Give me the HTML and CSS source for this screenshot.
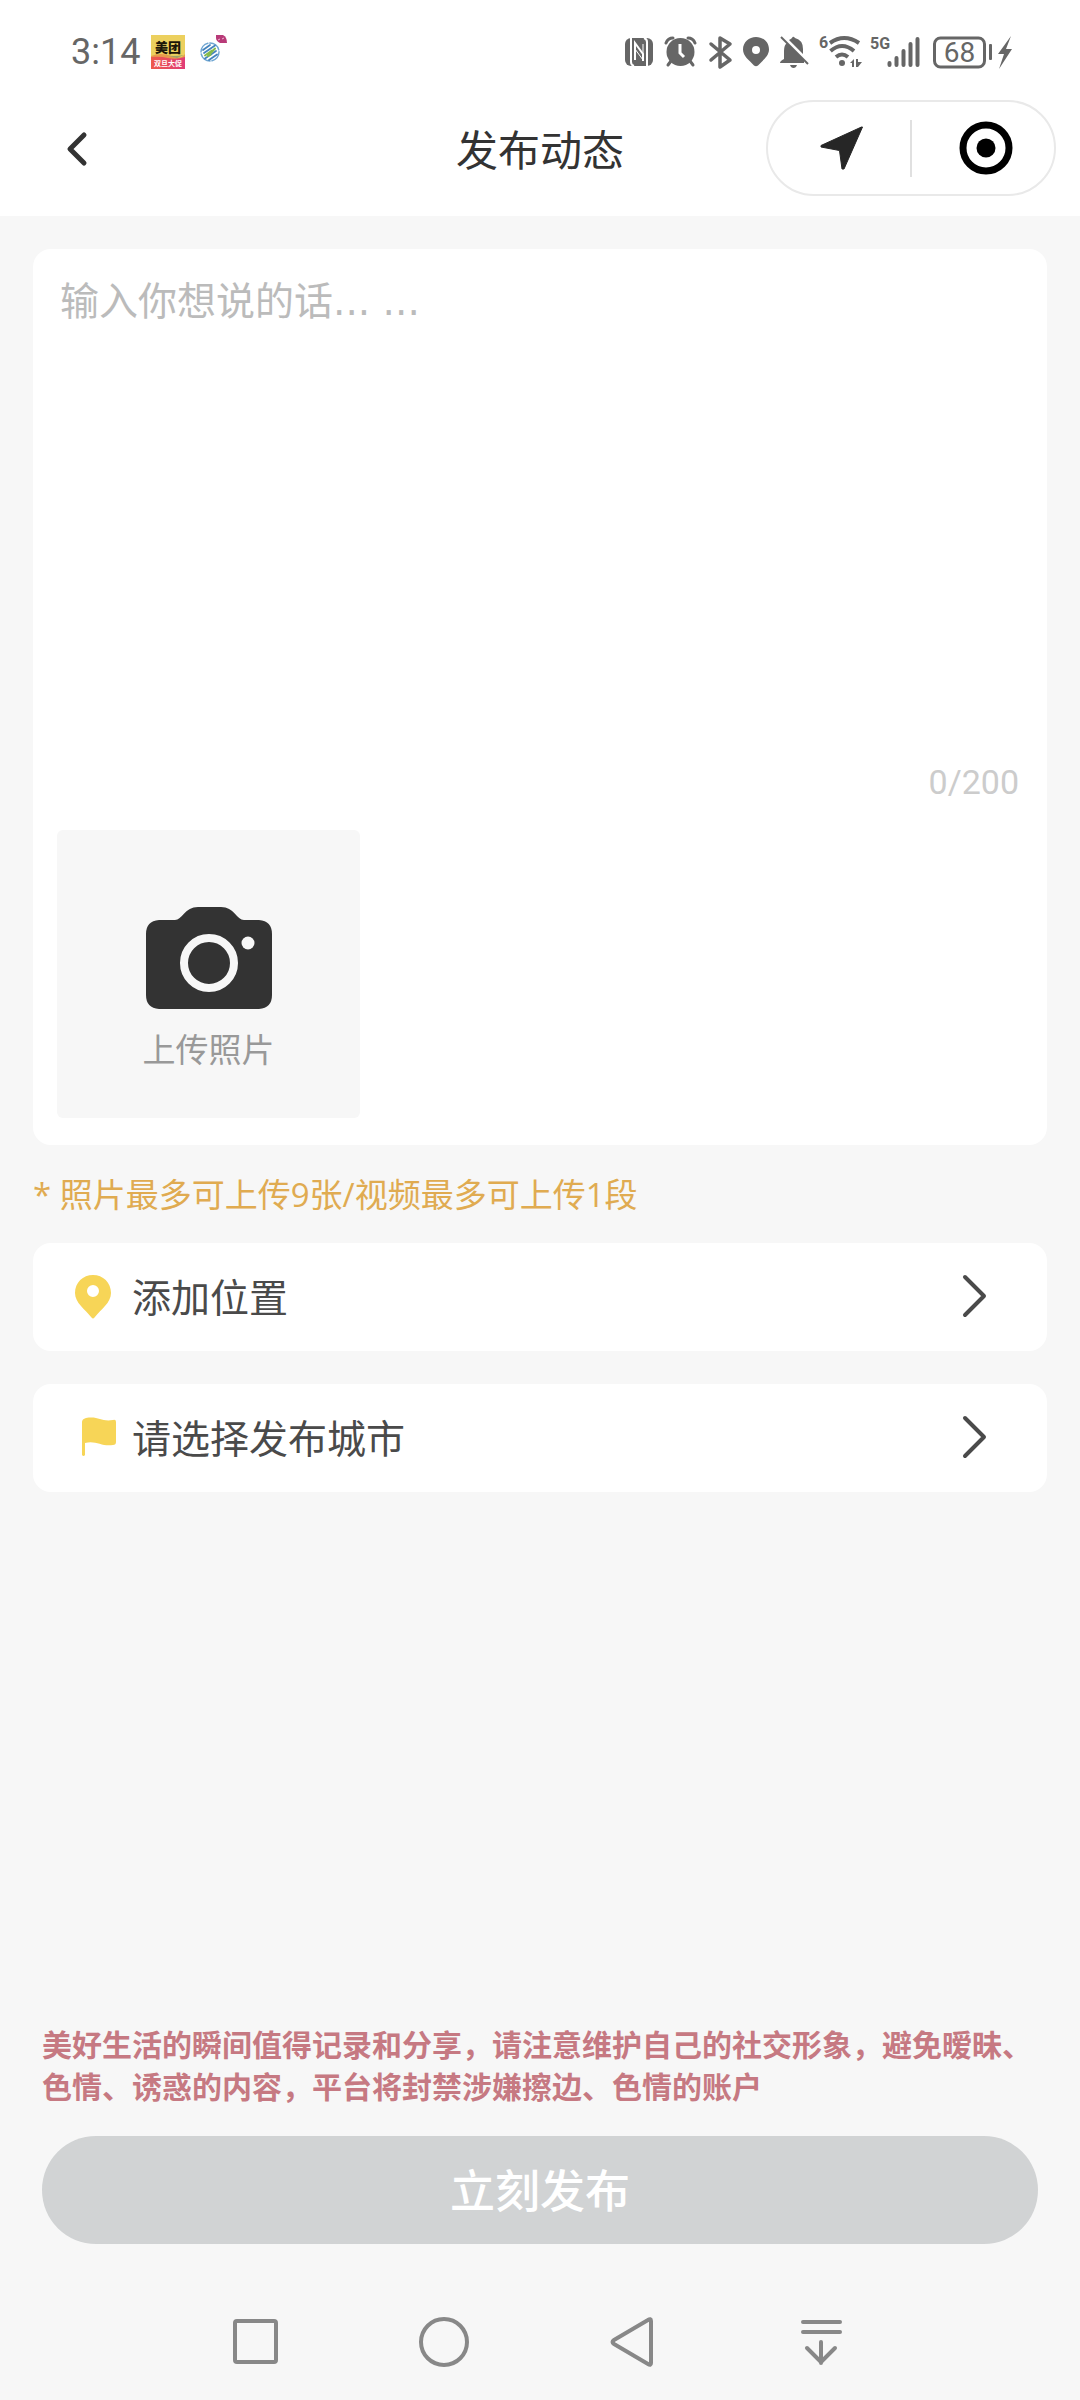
FILE: index.html
```html
<!DOCTYPE html>
<html lang="zh-CN">
<head>
<meta charset="utf-8">
<meta name="viewport" content="width=device-width, initial-scale=1">
<title>发布动态</title>
<link rel="stylesheet" href="styles.css">
</head>
<body>
<div class="page">
  <header class="top">
    <div class="status">
      <span class="time">3:14</span>
      <svg class="app-icon" width="34" height="34" viewBox="0 0 34 34" role="img" aria-label="美团">
        <defs><linearGradient id="promo" x1="0" x2="1" y1="0" y2="0"><stop offset="0" stop-color="#ee5a4a"/><stop offset="1" stop-color="#e03c78"/></linearGradient></defs>
        <rect width="34" height="34" fill="#ecd05e"/>
        <path d="M0 21Q10 17 20 21T34 19V34H0Z" fill="#e89a4c"/>
        <path d="M0 22Q9 21 17 23T34 22V34H0Z" fill="url(#promo)"/>
        <path d="M14 20Q22 22 33 20L26 23Z" fill="#9ca06a"/>
        <text class="app-name" x="17" y="17" text-anchor="middle">美团</text>
        <text class="app-promo" x="17" y="31" text-anchor="middle">双旦大促</text>
      </svg>
      <svg class="carrier" width="30" height="36" viewBox="198 34 30 36" aria-hidden="true">
        <g fill="none" stroke-linecap="round">
          <circle cx="210" cy="52" r="9" stroke="#6fa6d2" stroke-width="1.500" stroke-dasharray="12 2"/>
          <path stroke="#4584bd" stroke-width="1.800" d="M203 50L210 45M204 53L215 45.500M205 58.500L216 51M209 60L217 54.500"/>
          <path stroke="#86bb4b" stroke-width="2" d="M205 55.500L212 50.500M208.500 53.500L210.500 55M208 56L215 48.500"/>
        </g>
        <path d="M216 35H223Q227 37 227 43H220Q216 41 216 38Z" fill="#b83a78"/>
        <path d="M218 40L220 39M222 39L224 38" stroke="#f0b8d2"/>
      </svg>
      <div class="indicators">
        <svg width="32" height="36" viewBox="624 34 32 36" aria-label="NFC" role="img">
          <rect x="625" y="38" width="28" height="28" rx="6" fill="#666"/>
          <path d="M631 38V62Q631 65 634 66M647 66V42Q647 39 644 38" fill="none" stroke="#fff" stroke-width="2"/>
          <path d="M635 60V43L643 54V61" fill="none" stroke="#fff" stroke-width="2"/>
          <path d="M643 44V60L635 49" fill="none" stroke="#fff" stroke-width="1"/>
        </svg>
        <svg width="35" height="36" viewBox="664 34 35 36" aria-label="闹钟" role="img">
          <circle cx="680.500" cy="52" r="14" fill="#666"/>
          <path d="M671 61L668 65M690 61L693 65M666 43Q668 38 673 38M695 43Q693 38 688 38" stroke="#666" stroke-width="3" fill="none" stroke-linecap="round"/>
          <path d="M680 44V53L684 57" stroke="#fff" stroke-width="3" fill="none"/>
        </svg>
        <svg width="28" height="36" viewBox="706 34 28 36" aria-label="蓝牙" role="img">
          <path d="M710 44L729 60L719 67V38L729 44L710 60" fill="none" stroke="#666" stroke-width="3.500" stroke-linecap="round" stroke-linejoin="round"/>
        </svg>
        <svg width="29" height="36" viewBox="742 34 29 36" aria-label="定位" role="img">
          <path fill-rule="evenodd" fill="#666" d="M755 37C762 37 768 42 768 49.500C768 56 762 60 757 65.500Q755 67 753 65.500C748 60 742 56 742 49.500C742 42 748 37 755 37ZM755 46A4 4 0 1 0 755 54A4 4 0 1 0 755 46Z"/>
        </svg>
        <svg width="31" height="36" viewBox="778 34 31 36" aria-label="静音" role="img">
          <path fill="#666" d="M778 63Q778 61 782 59V51Q782 45 785 43L802 60V63ZM787 40Q789 39 790 38Q791 35.500 793 38Q801 40 801 49V54ZM788 65H795Q794 68 791.500 68Q789 68 788 65Z"/>
          <path d="M779 37L806 64" stroke="#666" stroke-width="2"/>
        </svg>
        <svg width="44" height="36" viewBox="816 34 44 36" aria-label="Wi-Fi 6" role="img">
          <text class="tiny" x="816" y="48">6</text>
          <g fill="none" stroke="#666" stroke-width="4"><path d="M827 43Q841 33 856 43"/><path d="M827.500 51Q839 41 851 51"/><path d="M833 57Q839 52 845 57"/></g>
          <circle cx="839" cy="63" r="3" fill="#666"/>
          <path fill="#666" d="M847 63L851 59V67H849V63ZM853 59H855V62H859L855 67H853Z"/>
        </svg>
        <svg width="51" height="36" viewBox="868 34 51 36" aria-label="5G" role="img">
          <text class="tiny" x="867" y="49">5G</text>
          <g stroke="#666" stroke-width="4" stroke-linecap="round"><path d="M886.500 63V65M893.500 58V65M900.500 51V65M907.500 44V65M914.500 39V65"/></g>
        </svg>
        <svg width="84" height="36" viewBox="926 34 84 36" aria-label="电量 68" role="img">
          <rect x="930.500" y="38" width="50" height="29" rx="6" fill="none" stroke="#666" stroke-width="3"/>
          <rect x="985" y="44" width="3" height="16" rx="1" fill="#666"/>
          <path fill="#666" d="M1007 36L994 54H1000L995 69L1008 49H1002Z"/>
          <text class="battery" x="955.500" y="62" text-anchor="middle">68</text>
        </svg>
      </div>
    </div>
    <div class="titlebar">
      <button class="back" type="button" aria-label="返回">
        <svg width="22" height="36" viewBox="0 0 22 36"><path d="M18 5L4 19L18 33" fill="none" stroke="#333" stroke-width="5" stroke-linecap="round" stroke-linejoin="round"/></svg>
      </button>
      <h1 class="title">发布动态</h1>
      <div class="capsule">
        <button type="button" aria-label="分享">
          <svg width="44" height="44" viewBox="0 0 44 44"><path d="M42.500 1L24 43H22L19.500 24.500L1 21V19.500L41.500 1Z" fill="#262626" stroke="#262626" stroke-linejoin="round"/></svg>
        </button>
        <span class="divider"></span>
        <button type="button" aria-label="关闭">
          <svg width="54" height="54" viewBox="0 0 54 54"><circle cx="27" cy="27" r="23" fill="none" stroke="#000" stroke-width="7"/><circle cx="27" cy="27" r="9.500"/></svg>
        </button>
      </div>
    </div>
  </header>

  <main class="content">
    <section class="card">
      <textarea class="post" aria-label="动态内容" maxlength="200" placeholder="输入你想说的话... ..."></textarea>
      <p class="count">0/200</p>
      <button class="upload" type="button">
        <svg width="128" height="102" viewBox="0 0 128 102" aria-hidden="true">
          <path d="M14 13H30C37 13 40 0 53 0H76C89 0 92 13 99 13H114Q127 14 127 27V88Q127 101 114 102H14Q1 101 1 88V27Q1 14 14 13Z" fill="#333"/>
          <circle cx="64" cy="56" r="25" fill="none" stroke="#f7f7f7" stroke-width="8"/>
          <circle cx="103" cy="36" r="6.500" fill="#f7f7f7"/>
        </svg>
        <span>上传照片</span>
      </button>
    </section>
    <p class="hint">* 照片最多可上传9张/视频最多可上传1段</p>
    <button class="row" type="button">
      <svg width="48" height="48" viewBox="0 0 48 48" aria-hidden="true"><path fill="#f7d557" fill-rule="evenodd" d="M24 3C34 3 42 10.500 42 21C42 31 32 37 25.500 45.500Q24 47.500 22.500 45.500C16 37 6 31 6 21C6 10.500 14 3 24 3ZM24 13A6 6 0 1 0 24 25A6 6 0 1 0 24 13Z"/></svg>
      <span class="row-label">添加位置</span>
      <svg width="28" height="44" viewBox="0 0 28 44" aria-hidden="true"><path class="chevron" d="M4 3L23 22L4 41"/></svg>
    </button>
    <button class="row" type="button">
      <svg width="48" height="48" viewBox="0 0 48 48" aria-hidden="true"><path fill="#f7d557" d="M13 9Q13 6 17 5C30 3 32 9 44 7Q47 6 47 9V29Q47 32 44 32C33 34 27 27 16 30V42Q14.500 44 13 42Z"/></svg>
      <span class="row-label">请选择发布城市</span>
      <svg width="28" height="44" viewBox="0 0 28 44" aria-hidden="true"><path class="chevron" d="M4 3L23 22L4 41"/></svg>
    </button>
  </main>

  <footer class="footer">
    <p class="notice">美好生活的瞬间值得记录和分享，请注意维护自己的社交形象，避免暧昧、色情、诱惑的内容，平台将封禁涉嫌擦边、色情的账户</p>
    <button class="submit" type="button">立刻发布</button>
  </footer>

  <nav class="sysnav" aria-label="系统导航">
    <button type="button" aria-label="最近任务"><svg width="52" height="52" viewBox="0 0 52 52"><rect x="5" y="5" width="41" height="41" rx="2"/></svg></button>
    <button type="button" aria-label="主页"><svg width="52" height="52" viewBox="0 0 52 52"><circle cx="26" cy="26" r="23"/></svg></button>
    <button type="button" aria-label="返回上一级"><svg width="52" height="52" viewBox="0 0 52 52"><path d="M45 5V47Q45 50 42 48L8 28Q5 26 8 24L42 4Q45 2 45 5Z"/></svg></button>
    <button type="button" aria-label="收起导航"><svg width="52" height="52" viewBox="0 0 52 52"><path d="M8 6H45M8 16H45M26 26V47M12 32L26 46L40 32"/></svg></button>
  </nav>
</div>
</body>
</html>
```
FILE: styles.css
```css
* { box-sizing: border-box; }

body {
  margin: 0;
  background: #f7f7f7;
  color: #333;
  font-family: "Noto Sans CJK SC", "Noto Sans", sans-serif;
}

h1, p { margin: 0; font-weight: 400; }

button {
  margin: 0;
  padding: 0;
  border: 0;
  background: none;
  color: inherit;
  font: inherit;
  cursor: pointer;
}

svg { display: block; flex: none; overflow: visible; }

.page {
  display: flex;
  flex-direction: column;
  min-height: 100vh;
}

/* Status and title bars */
.top { background: #fff; }

.status {
  display: flex;
  align-items: center;
  height: 80px;
  padding: 24px 66px 0 71px;
}

.time {
  width: 80px;
  color: #666;
  font-family: Roboto, sans-serif;
  font-size: 36px;
  line-height: 40px;
}

.app-name { font-size: 13px; font-weight: 900; fill: #1c1608; }
.app-promo { font-size: 7px; font-weight: 700; fill: #fff; }
.carrier { margin-left: 13px; }

.indicators {
  display: flex;
  gap: 8px;
  margin-left: auto;
}

.tiny { font: 700 16px "Roboto", sans-serif; fill: #666; }
.battery { font: 400 28px "Roboto", sans-serif; fill: #666; }

.titlebar {
  display: grid;
  grid-template-columns: 1fr auto 1fr;
  align-items: center;
  height: 136px;
  padding: 0 24px;
}

.back { justify-self: start; padding: 20px 42px; }

.title { font-size: 42px; line-height: 60px; }

.capsule {
  display: flex;
  align-items: center;
  justify-self: end;
  width: 290px;
  height: 96px;
  border: 2px solid #e9e9e9;
  border-radius: 48px;
}

.capsule button {
  display: flex;
  flex: 1;
  justify-content: center;
  padding-left: 6px;
}

.divider { width: 2px; height: 57px; background: #e0e0e0; }

/* Post form */
.content {
  display: flex;
  flex: 1;
  flex-direction: column;
  padding: 33px 33px 0;
}

.card {
  padding: 25px 24px 27px;
  border-radius: 18px;
  background: #fff;
}

.post {
  display: block;
  width: 100%;
  height: 487px;
  padding: 0 3px;
  border: 0;
  outline: 0;
  resize: none;
  background: none;
  color: #333;
  font-family: "DejaVu Sans", "Noto Sans CJK SC", sans-serif;
  font-size: 39px;
  line-height: 56px;
}

.post::placeholder { color: #bbb; opacity: 1; }

.count {
  margin-bottom: 27px;
  padding: 0 4px;
  color: #ccc;
  font-family: Roboto, sans-serif;
  font-size: 34px;
  line-height: 42px;
  text-align: right;
}

.upload {
  display: flex;
  flex-direction: column;
  align-items: center;
  gap: 15px;
  width: 303px;
  height: 288px;
  padding-top: 77px;
  border-radius: 6px;
  background: #f7f7f7;
  color: #999;
  font-size: 33px;
  line-height: 48px;
}

.hint {
  margin: 26px 0 24px;
  color: #e0ab51;
  font-family: "Open Sans", "Noto Sans CJK SC", sans-serif;
  font-size: 33px;
  line-height: 48px;
}

.row {
  display: flex;
  align-items: center;
  height: 108px;
  padding: 0 58px 2px 36px;
  border-radius: 18px;
  background: #fff;
  color: #4a4a4a;
  font-size: 39px;
  line-height: 56px;
  text-align: left;
}

.row + .row { margin-top: 33px; }
.row-label { flex: 1; padding: 0 0 2px 15px; }

.chevron {
  fill: none;
  stroke: #4a4a4a;
  stroke-width: 4;
  stroke-linecap: round;
  stroke-linejoin: round;
}

/* Notice and submit */
.footer { padding: 0 42px; }

.notice {
  margin-bottom: 30px;
  color: #c67982;
  font-size: 30px;
  font-weight: 700;
  line-height: 42px;
}

.submit {
  width: 100%;
  height: 108px;
  padding-bottom: 4px;
  border-radius: 54px;
  background: #d1d3d4;
  color: #fff;
  font-size: 45px;
  font-weight: 500;
}

.sysnav {
  display: grid;
  grid-template-columns: repeat(4, 1fr);
  padding: 72px 15.3% 32px 15%;
}

.sysnav button { display: flex; justify-content: center; }

.sysnav svg {
  fill: none;
  stroke: #888;
  stroke-width: 4;
  stroke-linecap: round;
  stroke-linejoin: round;
}
```
